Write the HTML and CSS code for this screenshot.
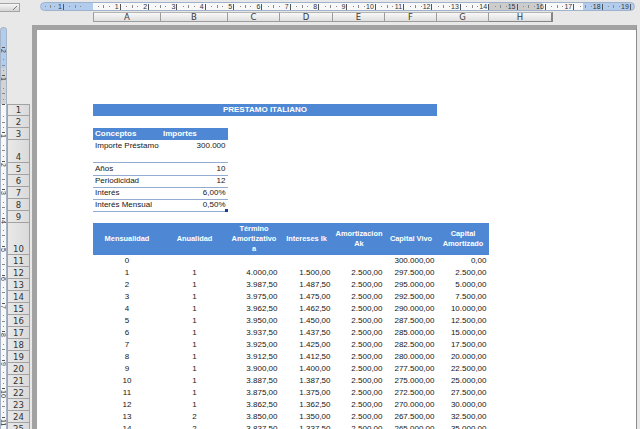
FILE: index.html
```html
<!DOCTYPE html>
<html lang="es">
<head>
<meta charset="utf-8">
<title>Prestamo Italiano</title>
<link rel="stylesheet" href="styles.css">
</head>
<body>
<div class="topbar">
  <div class="corner"></div>
  <div class="hruler">
    <div class="rc first"><span>1</span></div>
    <div class="rc"></div>
    <div class="rc"><span>1</span></div>
    <div class="rc"><span>2</span></div>
    <div class="rc"><span>3</span></div>
    <div class="rc"><span>4</span></div>
    <div class="rc"><span>5</span></div>
    <div class="rc"><span>6</span></div>
    <div class="rc"><span>7</span></div>
    <div class="rc"><span>8</span></div>
    <div class="rc"><span>9</span></div>
    <div class="rc"><span>10</span></div>
    <div class="rc"><span>11</span></div>
    <div class="rc"><span>12</span></div>
    <div class="rc"><span>13</span></div>
    <div class="rc"><span>14</span></div>
    <div class="rc"><span>15</span></div>
    <div class="rc"><span>16</span></div>
    <div class="rc"><span>17</span></div>
    <div class="rc"><span>18</span></div>
    <div class="rc"><span>19</span></div>
  </div>
</div>
<div class="colheads">
  <div class="ch ca">A</div>
  <div class="ch cb">B</div>
  <div class="ch cc">C</div>
  <div class="ch cd">D</div>
  <div class="ch ce">E</div>
  <div class="ch cf">F</div>
  <div class="ch cg">G</div>
  <div class="ch chh">H</div>
</div>
<div class="main">
  <div class="vruler">
    <div class="vspacer"></div>
    <div class="vc"><span>2</span></div>
    <div class="vc"><span>1</span></div>
    <div class="vc"></div>
    <div class="vc"><span>1</span></div>
    <div class="vc"><span>2</span></div>
    <div class="vc"><span>3</span></div>
    <div class="vc"><span>4</span></div>
    <div class="vc"><span>5</span></div>
    <div class="vc"><span>6</span></div>
    <div class="vc"><span>7</span></div>
    <div class="vc"><span>8</span></div>
    <div class="vc"><span>9</span></div>
    <div class="vc"><span>10</span></div>
    <div class="vc"><span>11</span></div>
    <div class="vc"><span>12</span></div>
  </div>
  <div class="rowheads">
    <div class="rh">1</div>
    <div class="rh">2</div>
    <div class="rh">3</div>
    <div class="rh h23">4</div>
    <div class="rh">5</div>
    <div class="rh">6</div>
    <div class="rh">7</div>
    <div class="rh">8</div>
    <div class="rh">9</div>
    <div class="rh h32">10</div>
    <div class="rh">11</div>
    <div class="rh">12</div>
    <div class="rh">13</div>
    <div class="rh">14</div>
    <div class="rh">15</div>
    <div class="rh">16</div>
    <div class="rh">17</div>
    <div class="rh">18</div>
    <div class="rh">19</div>
    <div class="rh">20</div>
    <div class="rh">21</div>
    <div class="rh">22</div>
    <div class="rh">23</div>
    <div class="rh">24</div>
    <div class="rh">25</div>
  </div>
  <div class="frame">
    <div class="sheet">
      <div class="row"><div class="title">PRESTAMO ITALIANO</div></div>
      <div class="row"></div>
      <div class="row"><div class="chead">Conceptos</div><div class="chead">Importes</div></div>
      <div class="row h23"><div class="cl top">Importe Préstamo</div><div class="cl top num">300.000</div></div>
      <div class="row"><div class="cl">Años</div><div class="cl num">10</div></div>
      <div class="row"><div class="cl">Periodicidad</div><div class="cl num">12</div></div>
      <div class="row"><div class="cl">Interés</div><div class="cl num">6,00%</div></div>
      <div class="row"><div class="cl">Interés Mensual</div><div class="cl num sel">0,50%</div></div>
      <div class="row"></div>
      <div class="row h32">
        <div class="bh">Mensualidad</div>
        <div class="bh">Anualidad</div>
        <div class="bh">Término<br>Amortizativo<br>a</div>
        <div class="bh">Intereses Ik</div>
        <div class="bh">Amortizacion<br>Ak</div>
        <div class="bh">Capital Vivo</div>
        <div class="bh">Capital<br>Amortizado</div>
      </div>
      <div class="row"><div class="ctr">0</div><div></div><div></div><div></div><div></div><div class="num">300.000,00</div><div class="num">0,00</div></div>
      <div class="row"><div class="ctr">1</div><div class="ctr">1</div><div class="num">4.000,00</div><div class="num">1.500,00</div><div class="num">2.500,00</div><div class="num">297.500,00</div><div class="num">2.500,00</div></div>
      <div class="row"><div class="ctr">2</div><div class="ctr">1</div><div class="num">3.987,50</div><div class="num">1.487,50</div><div class="num">2.500,00</div><div class="num">295.000,00</div><div class="num">5.000,00</div></div>
      <div class="row"><div class="ctr">3</div><div class="ctr">1</div><div class="num">3.975,00</div><div class="num">1.475,00</div><div class="num">2.500,00</div><div class="num">292.500,00</div><div class="num">7.500,00</div></div>
      <div class="row"><div class="ctr">4</div><div class="ctr">1</div><div class="num">3.962,50</div><div class="num">1.462,50</div><div class="num">2.500,00</div><div class="num">290.000,00</div><div class="num">10.000,00</div></div>
      <div class="row"><div class="ctr">5</div><div class="ctr">1</div><div class="num">3.950,00</div><div class="num">1.450,00</div><div class="num">2.500,00</div><div class="num">287.500,00</div><div class="num">12.500,00</div></div>
      <div class="row"><div class="ctr">6</div><div class="ctr">1</div><div class="num">3.937,50</div><div class="num">1.437,50</div><div class="num">2.500,00</div><div class="num">285.000,00</div><div class="num">15.000,00</div></div>
      <div class="row"><div class="ctr">7</div><div class="ctr">1</div><div class="num">3.925,00</div><div class="num">1.425,00</div><div class="num">2.500,00</div><div class="num">282.500,00</div><div class="num">17.500,00</div></div>
      <div class="row"><div class="ctr">8</div><div class="ctr">1</div><div class="num">3.912,50</div><div class="num">1.412,50</div><div class="num">2.500,00</div><div class="num">280.000,00</div><div class="num">20.000,00</div></div>
      <div class="row"><div class="ctr">9</div><div class="ctr">1</div><div class="num">3.900,00</div><div class="num">1.400,00</div><div class="num">2.500,00</div><div class="num">277.500,00</div><div class="num">22.500,00</div></div>
      <div class="row"><div class="ctr">10</div><div class="ctr">1</div><div class="num">3.887,50</div><div class="num">1.387,50</div><div class="num">2.500,00</div><div class="num">275.000,00</div><div class="num">25.000,00</div></div>
      <div class="row"><div class="ctr">11</div><div class="ctr">1</div><div class="num">3.875,00</div><div class="num">1.375,00</div><div class="num">2.500,00</div><div class="num">272.500,00</div><div class="num">27.500,00</div></div>
      <div class="row"><div class="ctr">12</div><div class="ctr">1</div><div class="num">3.862,50</div><div class="num">1.362,50</div><div class="num">2.500,00</div><div class="num">270.000,00</div><div class="num">30.000,00</div></div>
      <div class="row"><div class="ctr">13</div><div class="ctr">2</div><div class="num">3.850,00</div><div class="num">1.350,00</div><div class="num">2.500,00</div><div class="num">267.500,00</div><div class="num">32.500,00</div></div>
      <div class="row"><div class="ctr">14</div><div class="ctr">2</div><div class="num">3.837,50</div><div class="num">1.337,50</div><div class="num">2.500,00</div><div class="num">265.000,00</div><div class="num">35.000,00</div></div>
    </div>
  </div>
</div>
</body>
</html>
```

FILE: styles.css
```css
* { box-sizing: border-box; margin: 0; padding: 0; }
html, body { width: 640px; height: 429px; overflow: hidden; }
body {
  background: #e8e8e8;
  font-family: "Liberation Sans", Arial, sans-serif;
  color: #161616;
}

/* top bar with split box and horizontal ruler */
.topbar { height: 12px; display: flex; align-items: flex-start; }
.corner {
  width: 20px; height: 9px; margin-top: 3px;
  border: 1px solid #a4a4a4; border-left: none;
  background:
    linear-gradient(135deg, transparent 0 60%, #7a7a7a 60% 68%, transparent 68%) right 2px bottom 1px / 6px 6px no-repeat,
    linear-gradient(#f6f6f6, #d4d4d4);
}
.hruler {
  margin-left: 20px; margin-top: 2px;
  width: 595px; height: 9px;
  border: 1px solid #9fb2cc; border-radius: 5px;
  overflow: hidden; display: flex;
  background: linear-gradient(to right,
    #b2ccee 0 52px, #f8f8f8 52px 448px, #cccccc 448px 501px,
    #f8f8f8 501px 542px, #b2ccee 542px);
}
.rc {
  flex: none; width: 28.35px; height: 100%;
  display: flex; justify-content: flex-end; align-items: center;
  background:
    linear-gradient(#8a8a8a, #8a8a8a) 20% 50% / 1px 1px no-repeat,
    linear-gradient(#8a8a8a, #8a8a8a) 40% 50% / 1px 3px no-repeat,
    linear-gradient(#8a8a8a, #8a8a8a) 60% 50% / 1px 1px no-repeat;
}
.rc.first { width: 23px; }
.rc span {
  font-size: 7px; line-height: 6px; color: #333;
  padding-right: 1px; border-right: 1px solid #555;
}

/* column headers */
.colheads { height: 10px; display: flex; padding-left: 93px; }
.ch {
  height: 10px;
  border-top: 1px solid #b4b4b4; border-right: 1px solid #9c9c9c; border-bottom: 1px solid #9c9c9c;
  background: linear-gradient(#f8f8f8, #dfdfdf);
  font-family: "DejaVu Sans", sans-serif; font-size: 8.5px; line-height: 8px;
  color: #3a3a3a; text-align: center;
}
.ca { width: 68px; border-left: 1px solid #9c9c9c; }
.cb { width: 67px; }
.cc { width: 52px; }
.cd { width: 53px; }
.ce { width: 52px; }
.cf { width: 52px; }
.cg { width: 52px; }
.chh { width: 64px; border-right: 2px solid #858585; border-bottom-color: #858585; }

/* main area */
.main { display: flex; height: 407px; }

.vruler {
  flex: none; width: 7px; height: 402px; margin-top: 5px;
  border: 1px solid #a7b4c6; border-bottom: none; border-radius: 4px 4px 0 0;
  overflow: hidden; display: flex; flex-direction: column;
  background: linear-gradient(#b2ccee 0 40px, #d3d3d3 40px 76px, #f7f7f7 76px);
}
.vspacer { flex: none; height: 19px; }
.vc {
  flex: none; height: 28.45px;
  background:
    linear-gradient(#555, #555) 50% 0 / 3px 1px no-repeat,
    linear-gradient(#8a8a8a, #8a8a8a) 50% 45% / 1px 1px no-repeat,
    linear-gradient(#8a8a8a, #8a8a8a) 50% 65% / 3px 1px no-repeat,
    linear-gradient(#8a8a8a, #8a8a8a) 50% 85% / 1px 1px no-repeat;
}
.vc span {
  display: block; writing-mode: vertical-rl;
  font-size: 7px; line-height: 5px; color: #333;
  margin: 2px auto 0; width: 5px;
}

.rowheads { flex: none; width: 23px; padding-top: 82px; }
.rh {
  height: 12px;
  border-left: 1px solid #a2a2a2; border-right: 1px solid #a2a2a2; border-bottom: 1px solid #a2a2a2;
  background: linear-gradient(to right, #e9e9e9, #dadada);
  font-family: "DejaVu Sans", sans-serif; font-size: 8.5px; line-height: 10px;
  color: #333;
  display: flex; justify-content: center; align-items: flex-end;
}
.rh:first-child { border-top: 1px solid #a2a2a2; }
.rh.h23 { height: 23px; }
.rh.h32 { height: 32px; }

/* page */
.frame {
  flex: none; width: 605px; height: 420px;
  margin-left: 2px; margin-top: 3px;
  border-top: 5px solid #a2a2a2; border-left: 5px solid #a2a2a2; border-right: 1px solid #8c8c8c;
  background: #fff;
  padding-top: 74px; padding-left: 56px;
}
.sheet { width: 460px; }
.row {
  display: grid;
  grid-template-columns: 68px 67px 52px 53px 52px 52px 52px 64px;
  height: 12px;
}
.row.h23 { height: 23px; }
.row.h32 { height: 32px; }
.row > div {
  font-size: 8px; line-height: 12px; white-space: nowrap;
  padding: 0 2px;
}
.num { text-align: right; padding-right: 2.5px !important; }
.ctr { text-align: center; }

.title {
  grid-column: span 6;
  background: #4e88d5; color: #fff; font-weight: bold; text-align: center;
}
.chead { background: #4e88d5; color: #fff; font-weight: bold; line-height: 11px !important; }
.cl { border-bottom: 1px solid #93abd0; }
.top { align-self: stretch; }
.sel { position: relative; }
.sel::after {
  content: ""; position: absolute; right: 0; bottom: -1px;
  width: 3px; height: 3px; background: #1d3d92;
}

.row > .bh {
  background: #4e88d5; color: #fff; font-weight: bold;
  font-size: 7.4px; line-height: 10px; white-space: nowrap;
  display: flex; align-items: center; justify-content: center; text-align: center;
  padding: 0;
}
```
